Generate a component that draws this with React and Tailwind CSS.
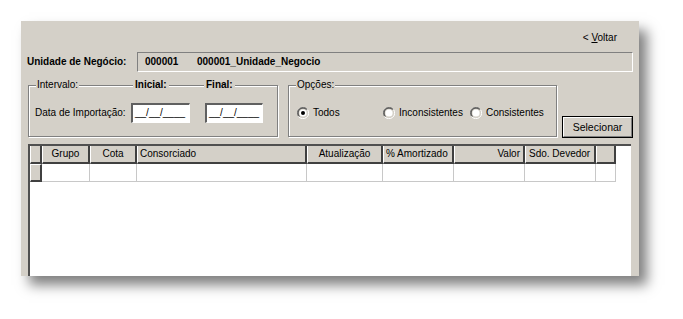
import React from 'react';

const font = { fontFamily: '"Liberation Sans", Arial, sans-serif' };

function Radio({ checked }) {
  return (
    <svg width="12" height="12" viewBox="0 0 12 12" className="shrink-0">
      <path d="M10.5 2.5 A5 5 0 0 0 1.5 9.5" fill="none" stroke="#808080" strokeWidth="1" />
      <path d="M9.5 2.5 A4 4 0 0 0 2.5 9.5" fill="none" stroke="#404040" strokeWidth="1" />
      <path d="M1.5 9.5 A5 5 0 0 0 10.5 2.5" fill="none" stroke="#ffffff" strokeWidth="1" />
      <circle cx="6" cy="6" r="3.6" fill="#fff" />
      {checked && <circle cx="6" cy="6" r="2" fill="#000" />}
    </svg>
  );
}

function DateInput({ w }) {
  return (
    <div className={`${w} h-[20px] shrink-0 bg-white border-t-2 border-l-2 border-t-[#606060] border-l-[#606060] border-b border-r border-b-white border-r-white flex items-center pl-[2px] text-black`}>
      __/__/____
    </div>
  );
}

const cols = [
  { w: 'w-[48px]', label: 'Grupo', align: 'justify-center' },
  { w: 'w-[47px]', label: 'Cota', align: 'justify-center' },
  { w: 'w-[170px]', label: 'Consorciado', align: 'justify-start pl-[2px]' },
  { w: 'w-[76px]', label: 'Atualização', align: 'justify-center' },
  { w: 'w-[71px]', label: '% Amortizado', align: 'justify-start pl-[2px]' },
  { w: 'w-[71px]', label: 'Valor', align: 'justify-end pr-[3px]' },
  { w: 'w-[71px]', label: 'Sdo. Devedor', align: 'justify-start pl-[3px]' },
  { w: 'w-[20px]', label: '', align: '' },
];

function HeaderCell({ w, align, children }) {
  return (
    <div className={`${w} h-[18px] shrink-0 flex items-center whitespace-nowrap overflow-hidden ${align} bg-[#d4d0c8] border-l border-l-white border-r-2 border-r-[#404040] border-b-2 border-b-[#404040]`}>
      {children}
    </div>
  );
}

export default function App() {
  return (
    <div className="w-[683px] h-[319px] bg-white pt-[21px] pl-[21px] overflow-hidden text-[10px] leading-none text-black whitespace-nowrap" style={font}>
      <div className="w-[618px] h-[255px] bg-[#d4d0c8] shadow-[8px_9px_12px_rgba(0,0,0,0.5)] flex flex-col overflow-hidden">
        {/* top: voltar */}
        <div className="h-[31px] flex justify-end items-start pt-[12px] pr-[22px]">
          <span>&lt; <span className="underline">V</span>oltar</span>
        </div>

        {/* unidade */}
        <div className="h-[20px] flex items-center pl-[6px] pr-[6px]">
          <span className="font-bold w-[110px]">Unidade de Negócio:</span>
          <div className="flex-1 h-[20px] flex items-center border border-t-[#808080] border-l-[#808080] border-b-white border-r-white font-bold pl-[7px]">
            <span className="w-[52px]">000001</span>
            <span>000001_Unidade_Negocio</span>
          </div>
        </div>

        {/* groups */}
        <div className="flex items-end mt-[13px] pl-[7px] h-[52px]">
          <div className="relative w-[250px] h-[52px] border border-[#808080] shadow-[inset_1px_1px_0_#fff,1px_1px_0_#fff] flex items-center pl-[6px] pt-[3px]">
            <span className="absolute left-[7px] -top-[6px] bg-[#d4d0c8] px-[1px]">Intervalo:</span>
            <span className="absolute left-[104px] -top-[6px] bg-[#d4d0c8] px-[2px] font-bold">Inicial:</span>
            <span className="absolute left-[175px] -top-[6px] bg-[#d4d0c8] px-[2px] font-bold">Final:</span>
            <span className="w-[96px] shrink-0">Data de Importação:</span>
            <DateInput w="w-[59px]" />
            <div className="w-[15px] shrink-0" />
            <DateInput w="w-[58px]" />
          </div>

          <div className="relative ml-[10px] w-[269px] h-[52px] border border-[#808080] shadow-[inset_1px_1px_0_#fff,1px_1px_0_#fff] flex items-center pl-[8px] pt-[3px]">
            <span className="absolute left-[7px] -top-[6px] bg-[#d4d0c8] px-[1px]">Opções:</span>
            <div className="flex items-center gap-[4px] w-[86px] shrink-0">
              <Radio checked />
              <span>Todos</span>
            </div>
            <div className="flex items-center gap-[4px] w-[87px] shrink-0">
              <Radio />
              <span>Inconsistentes</span>
            </div>
            <div className="flex items-center gap-[4px]">
              <Radio />
              <span>Consistentes</span>
            </div>
          </div>

          <div className="ml-[5px] mb-[-1px] w-[71px] h-[22px] border border-black bg-[#d4d0c8] flex">
            <div className="flex-1 flex items-center justify-center border border-t-white border-l-white border-b-[#808080] border-r-[#808080] text-[10.5px]">
              Selecionar
            </div>
          </div>
        </div>

        {/* grid */}
        <div className="mt-[7px] ml-[7px] w-[603px] flex-1 bg-white border-t-2 border-l-2 border-t-[#505050] border-l-[#505050] overflow-hidden">
          <div className="flex">
            <HeaderCell w="w-[12px]" align="" />
            {cols.map((c) => (
              <HeaderCell key={c.label || 'x'} w={c.w} align={c.align}>
                {c.label}
              </HeaderCell>
            ))}
          </div>
          <div className="flex">
            <div className="w-[12px] h-[18px] shrink-0 bg-[#d4d0c8] border-l border-t border-l-white border-t-white border-r-2 border-b-2 border-r-[#404040] border-b-[#404040]" />
            {cols.map((c) => (
              <div key={c.label || 'y'} className={`${c.w} h-[18px] shrink-0 border-r border-b border-[#c8c8c8]`} />
            ))}
          </div>
        </div>
      </div>
    </div>
  );
}
